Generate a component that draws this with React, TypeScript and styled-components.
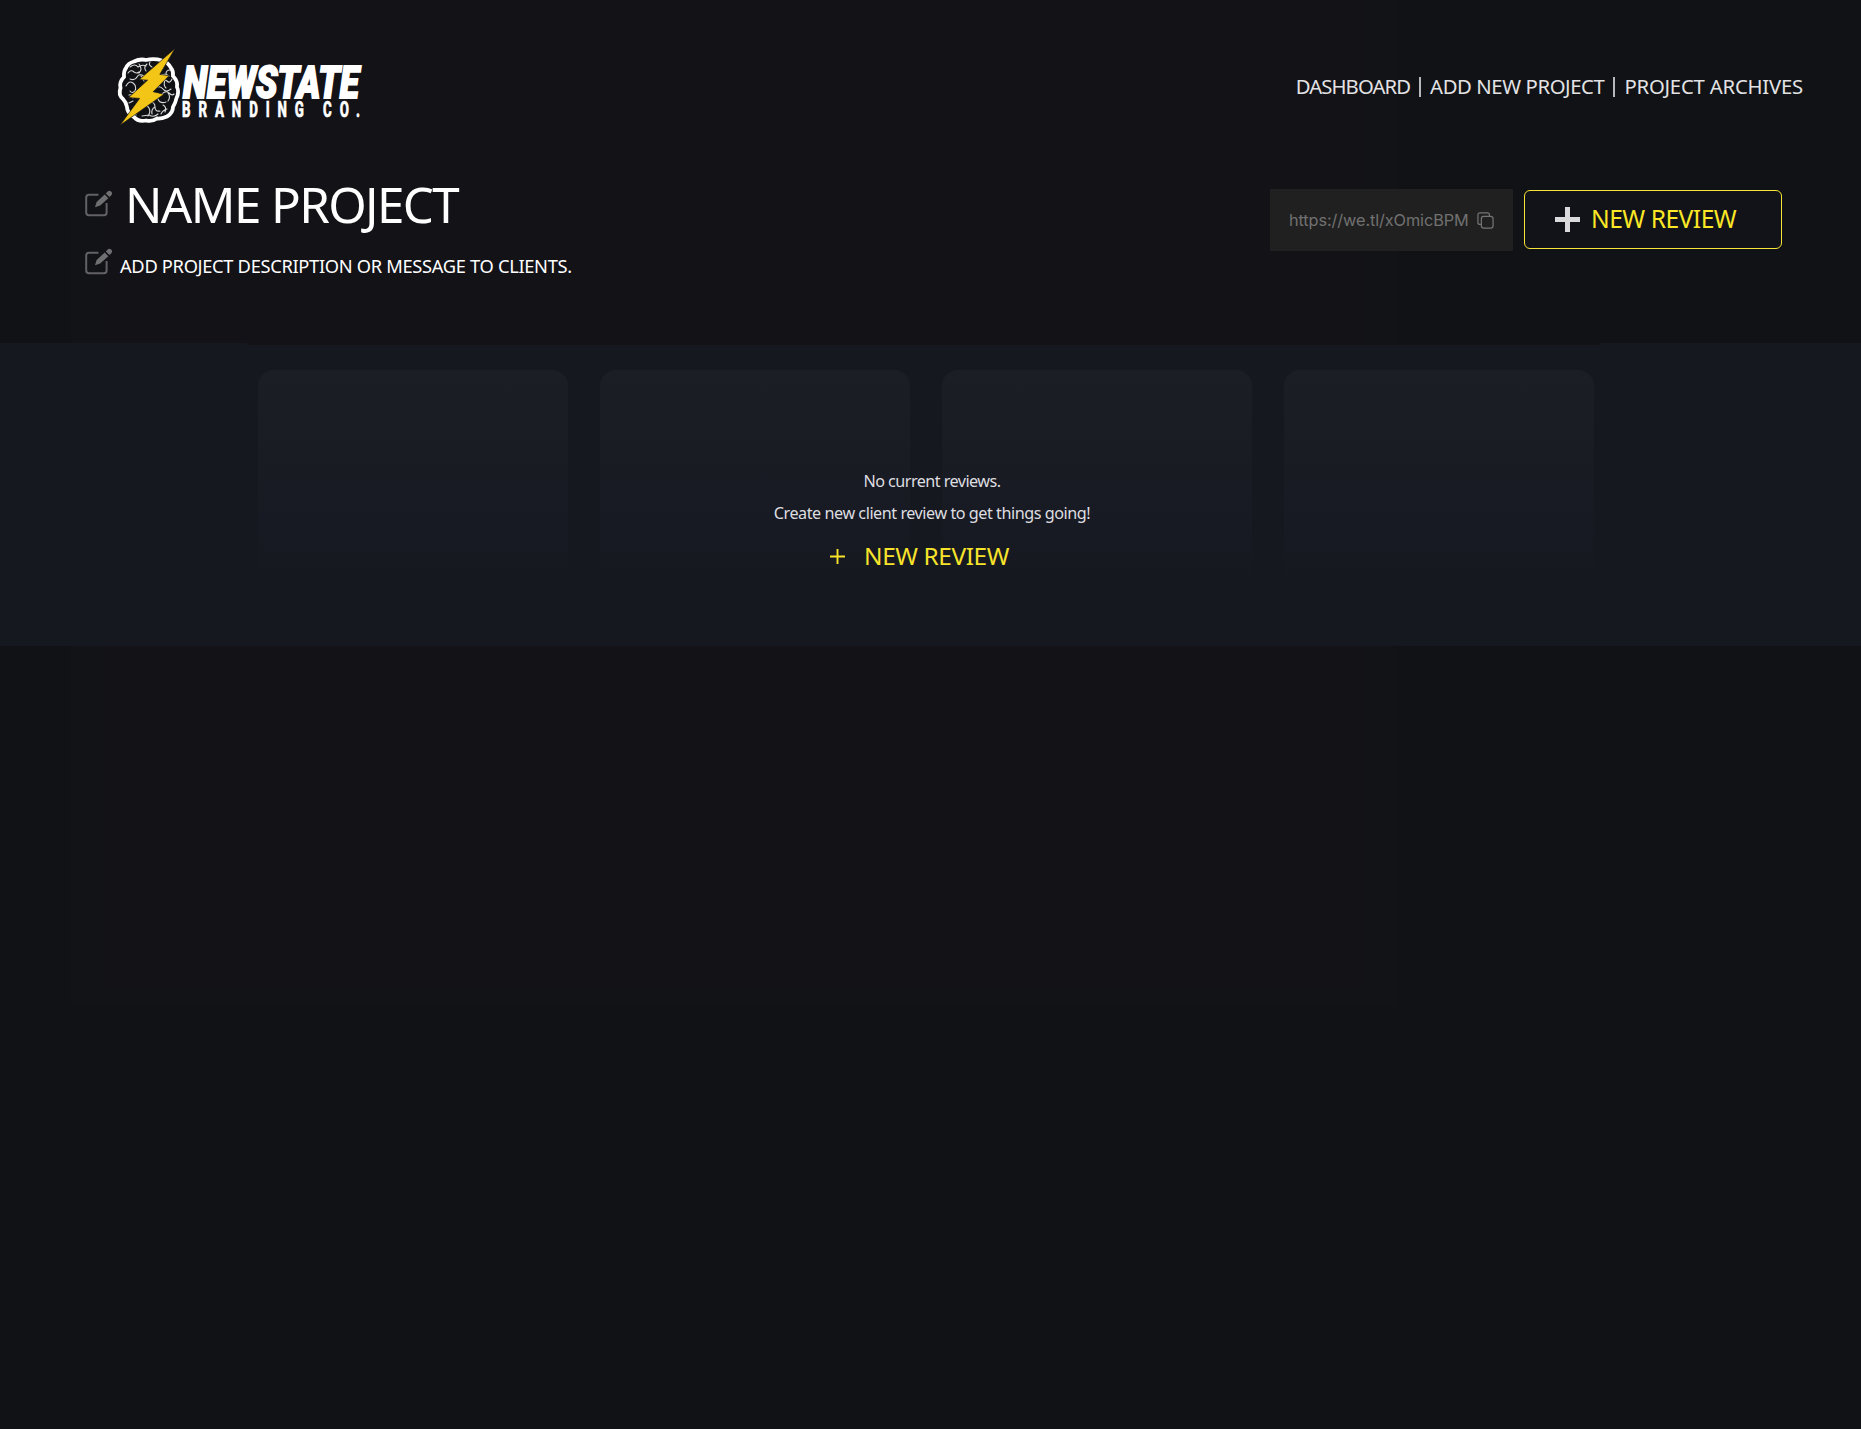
import React from "react";
import styled, { createGlobalStyle } from "styled-components";

const Global = createGlobalStyle`
  * { box-sizing: border-box; }
  body { margin: 0; background: #111215; }
  p, h1 { margin: 0; font-weight: 400; }
`;

const Page = styled.div`
  min-height: 1429px;
  background:
    linear-gradient(#131217, #131217) 104px 0 / 1260px 986px no-repeat,
    linear-gradient(#121316, #121316) 71px 0 / 1325px 1006px no-repeat,
    #111215;
  color: #fff;
  font-family: "Noto Sans", "Open Sans", sans-serif;
  overflow: hidden;
`;

const Header = styled.header`
  display: flex;
  justify-content: space-between;
  align-items: center;
  height: 174px;
  padding: 0 58px 0 112px;
`;

const Logo = styled.svg`
  display: block;
  width: 270px;
  height: 90px;
  overflow: visible;
`;

const Nav = styled.nav`
  display: flex;
  gap: 9.5px;
  margin-bottom: 2px;
  font-size: 20.3px;
  line-height: 28px;
  color: #e3e3e5;
  white-space: pre;
`;

const NavLink = styled.span<{ $spacing: number }>`
  letter-spacing: ${(p) => p.$spacing}px;
`;

const Divider = styled.i`
  width: 2px;
  height: 20px;
  margin: 5px 0 0 -1px;
  background: #b8b8bb;
`;

const Intro = styled.section`
  display: flex;
  justify-content: space-between;
  height: 171px;
  padding: 0 79px 0 85px;
`;

const Details = styled.div`
  display: flex;
  flex-direction: column;
`;

const Row = styled.div<{ $gap: number; $height: number }>`
  display: flex;
  gap: ${(p) => p.$gap}px;
  height: ${(p) => p.$height}px;
`;

const Title = styled.h1`
  font-size: 49.3px;
  line-height: 60px;
  letter-spacing: -1.6px;
  white-space: nowrap;
`;

const Description = styled.p`
  font-size: 18.3px;
  line-height: 26px;
  letter-spacing: -0.32px;
  margin-top: 6px;
  white-space: nowrap;
`;

const EditSvg = styled.svg<{ $top: number }>`
  width: 28px;
  height: 28px;
  margin-top: ${(p) => p.$top}px;
  flex: none;
`;

const Actions = styled.div`
  display: flex;
  align-items: flex-start;
  gap: 11px;
  padding-top: 15px;
`;

const LinkBox = styled.div`
  display: flex;
  align-items: center;
  gap: 7px;
  width: 243px;
  height: 62px;
  padding-left: 19px;
  background: #202020;
  color: #717171;
  font: 16.3px/24px Inter, sans-serif;
`;

const LinkText = styled.span`
  width: 181px;
  letter-spacing: -0.1px;
  white-space: nowrap;
`;

const CopySvg = styled.svg`
  width: 17px;
  height: 17px;
  flex: none;
`;

const ReviewButton = styled.button`
  display: flex;
  align-items: center;
  gap: 11px;
  width: 258px;
  height: 59px;
  margin-top: 1px;
  padding: 0 0 1px 30px;
  border: 1px solid #f8e436;
  border-radius: 6px;
  background: #121318;
  color: #fbe725;
  font: 24.6px/34px "Noto Sans", sans-serif;
  letter-spacing: -0.5px;
  white-space: nowrap;
`;

const Plus = styled.svg<{ $size: number }>`
  width: ${(p) => p.$size}px;
  height: ${(p) => p.$size}px;
  flex: none;
`;

const Band = styled.section`
  display: grid;
  height: 303px;
  margin-top: -2px;
  background: linear-gradient(#131315, #131315) 247px 0 / 1353px 2px no-repeat, #15181f;
`;

const Cards = styled.div`
  grid-area: 1 / 1;
  display: grid;
  grid-template-columns: repeat(4, 310px);
  gap: 32px;
  justify-content: start;
  padding: 27px 0 0 258px;
`;

const Card = styled.div`
  height: 216px;
  border-radius: 16px 16px 0 0;
  background: linear-gradient(#1b1e25, #171a22 75%, #15181f);
`;

const Empty = styled.div`
  grid-area: 1 / 1;
  display: flex;
  flex-direction: column;
  align-items: center;
  padding: 127px 0 0 3px;
  font-size: 16.2px;
  line-height: 22px;
  color: #dedee0;
`;

const Message = styled.p<{ $spacing: number }>`
  height: 32px;
  letter-spacing: ${(p) => p.$spacing}px;
  white-space: nowrap;
`;

const TextAction = styled.div`
  display: flex;
  align-items: center;
  gap: 19px;
  width: 204px;
  height: 34px;
  margin-top: 5px;
  font-size: 24.4px;
  letter-spacing: -0.4px;
  color: #f8e32b;
  white-space: nowrap;
`;

function EditIcon({ top }: { top: number }) {
  return (
    <EditSvg $top={top} viewBox="0 0 28 28" fill="none">
      <path d="M13.5 4.700H4Q1.200 4.700 1.200 7.500v15Q1.200 25.300 4 25.300h15Q21.600 25.300 21.600 22.500v-9.500" stroke="#626265" strokeWidth="2" />
      <path d="M10 17.200l1.600-5.100 8.100-7.600 3.600 3.700-8.100 7.400z" fill="#707073" />
      <path d="M20.800 3.400l1.900-2q1.500-1.500 3.400.2 1.900 1.800.2 3.600l-1.900 1.900z" fill="#707073" />
    </EditSvg>
  );
}

function BrandLogo() {
  return (
    <Logo viewBox="112 42 270 90">
      <path
        d="M134 61.500Q140 58.500 146 60Q154 58 162 60.500Q168 62 171 68Q173.500 71 173 76Q178 81 177 87Q179.500 92 176.500 98Q175.500 103 173 107Q173 113 167 116.500Q161 119 157 118.500Q152 122 146 120.500Q138 122 134 117Q127 113 127 107Q126 102 123 99Q118 95 120.500 88Q119 82 124 77Q123.500 71 126 68Q128 63 134 61.500Z"
        fill="#101115"
        stroke="#fff"
        strokeWidth="3.800"
      />
      <g fill="none" stroke="#d8d8d8" strokeWidth="1.100" strokeLinecap="round">
        <path d="M130 67q5-4 8 0q4-3 8-1M128 73q3-4 6-1q3 2 5 0M130 79q5 2 7-2t7-1M126 86q3-6 7-3t2 8q-3 3-5 0M139 64q4 5 0 9M147 64q-4 3-1 7M141 76l3 5M150 62q-2 3 2 5" />
        <path d="M161 75q5-2 8 1M160 82q4-4 7-1t5-2M155 88q5-3 8 1t8 0M165 80q-2 5 1 8M162 94q4-4 7-1t5 1M168 93q3 4 0 8M158 99q2 5 8 3M150 102q5 0 5 5t5 4M142 108q5-4 7 0t-1 8M155 107q-4 2-3 7M163 105q4 2 2 7M139 111q-5 1-3 4M167 109q-4 1-6 5M142 116l7-1q5 3 9-1" />
        <path d="M129 95q3-1 4 3M129 103l4-2M170 70q-4 0-4 4" />
      </g>
      <path d="M175 48.500L139.300 79.600L147.500 80.200L128.600 97.600L139.600 98.400L120 125.300L164 94.200L153.200 91.700L169.200 75.600L159.800 74.400Z" fill="#f3c516" stroke="#15151a" strokeWidth=".7" />
      <g fill="#fff" stroke="#fff">
        <text x="183" y="97.500" fontFamily="Roboto" fontWeight="900" fontStyle="italic" fontSize="43.500" strokeWidth="1.900" textLength="176" lengthAdjust="spacingAndGlyphs">NEWSTATE</text>
        <g transform="translate(182 117) scale(.62 1)">
          <text fontFamily="Roboto" fontWeight="800" fontSize="21.500" strokeWidth=".6" textLength="287" lengthAdjust="spacing">BRANDING CO.</text>
        </g>
      </g>
    </Logo>
  );
}

export default function App() {
  return (
    <>
      <Global />
      <Page>
        <Header>
          <BrandLogo />
          <Nav>
            <NavLink $spacing={-0.9}>DASHBOARD</NavLink>
            <Divider />
            <NavLink $spacing={-0.4}>ADD NEW PROJECT</NavLink>
            <Divider />
            <NavLink $spacing={-0.2}>PROJECT ARCHIVES</NavLink>
          </Nav>
        </Header>
        <Intro>
          <Details>
            <Row $gap={12} $height={73}>
              <EditIcon top={16} />
              <Title>NAME PROJECT</Title>
            </Row>
            <Row $gap={7} $height={50}>
              <EditIcon top={1} />
              <Description>ADD PROJECT DESCRIPTION OR MESSAGE TO CLIENTS.</Description>
            </Row>
          </Details>
          <Actions>
            <LinkBox>
              <LinkText>https://we.tl/xOmicBPM</LinkText>
              <CopySvg viewBox="0 0 18 18" fill="none" stroke="#747474" strokeWidth="1.300">
                <rect x="4.600" y="4.600" width="12.400" height="12.400" rx="2.500" />
                <path d="M4.600 13.200H3.200Q1 13.200 1 11V3Q1 1 3 1H11Q13.200 1 13.200 3.200V4.600" />
              </CopySvg>
            </LinkBox>
            <ReviewButton>
              <Plus $size={25} viewBox="0 0 25 25"><path d="M12.500 0V25M0 12.500H25" stroke="#dadadc" strokeWidth="5" /></Plus>
              NEW REVIEW
            </ReviewButton>
          </Actions>
        </Intro>
        <Band>
          <Cards>
            <Card />
            <Card />
            <Card />
            <Card />
          </Cards>
          <Empty>
            <Message $spacing={-0.55}>No current reviews.</Message>
            <Message $spacing={-0.47}>Create new client review to get things going!</Message>
            <TextAction>
              <Plus $size={15} viewBox="0 0 15 15"><path d="M7.500 0V15M0 7.500H15" stroke="#f8e32b" strokeWidth="1.900" /></Plus>
              NEW REVIEW
            </TextAction>
          </Empty>
        </Band>
      </Page>
    </>
  );
}
